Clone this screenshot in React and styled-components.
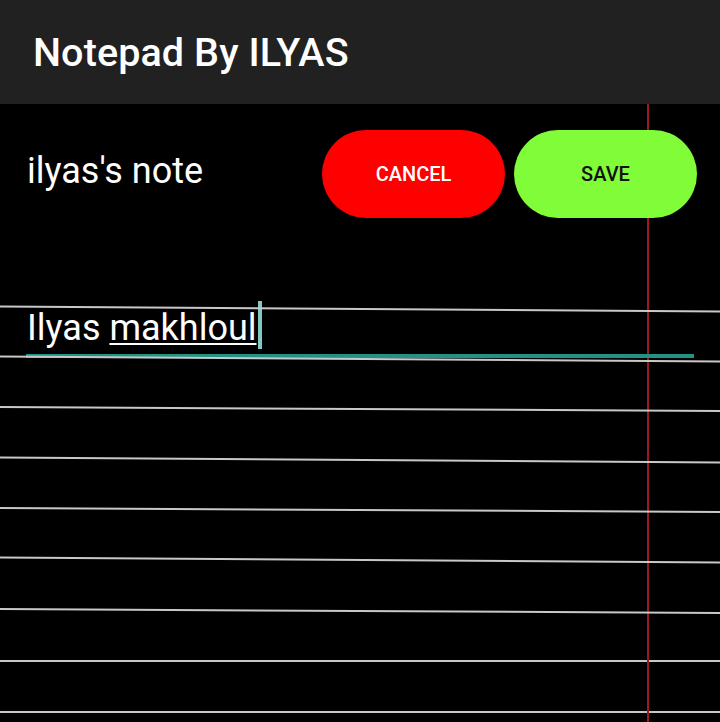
import React from 'react';
import styled, { createGlobalStyle } from 'styled-components';

const GlobalStyle = createGlobalStyle`
  html, body {
    margin: 0;
    padding: 0;
    background: #000;
    font-family: Roboto, 'Noto Sans', sans-serif;
  }
`;

const Page = styled.div`
  width: 720px;
  height: 722px;
  background: #000;
  display: flex;
  flex-direction: column;
  overflow: hidden;
`;

const AppBar = styled.header`
  height: 104px;
  flex-shrink: 0;
  background: #212121;
  display: flex;
  align-items: center;
  padding-left: 33px;
`;

const Title = styled.h1`
  margin: 0;
  color: #fff;
  font-size: 39.5px;
  font-weight: 500;
  letter-spacing: 0.1px;
`;

const Sheet = styled.main`
  flex: 1;
  display: grid;
  grid-template: 1fr / 1fr;
  overflow: hidden;
`;

// horizontal rules of the notepad paper
const Rules = styled.div`
  grid-area: 1 / 1;
  display: flex;
  flex-direction: column;
  gap: 48.4px;
  padding-top: 203.5px;
`;

const Rule = styled.div`
  height: 2px;
  flex-shrink: 0;
  background: #c8c8c8;
  transform: ${props => (props.tilt ? `rotate(${props.tilt}deg)` : 'none')};
`;

const MarginLine = styled.div`
  grid-area: 1 / 1;
  justify-self: start;
  width: 2px;
  margin-left: 647px;
  background: #9e1a1d;
`;

const Content = styled.div`
  grid-area: 1 / 1;
  display: flex;
  flex-direction: column;
`;

const TopRow = styled.div`
  display: flex;
  align-items: flex-start;
  padding: 26px 23px 0 27px;
`;

const NoteName = styled.div`
  flex: 1;
  margin-top: 19.6px;
  color: #fff;
  font-size: 36px;
  line-height: normal;
`;

const Actions = styled.div`
  display: flex;
  gap: 9px;
`;

const PillButton = styled.button`
  width: 183px;
  height: 88px;
  border: none;
  border-radius: 44px;
  background: ${props => props.bg};
  color: ${props => props.fg};
  font-family: Roboto, sans-serif;
  font-size: 20px;
  font-weight: 500;
  letter-spacing: 0;
  padding: 0;
  cursor: pointer;
`;

const Editor = styled.div`
  margin: 82.6px 0 0 26px;
  width: 667px;
  padding: 0 0 5px 1px;
  border-bottom: 4px solid #209384;
  color: #fff;
  font-size: 36px;
  line-height: normal;
  white-space: nowrap;
`;

const Misspelled = styled.span`
  text-decoration: underline;
  text-decoration-thickness: 2px;
  text-underline-offset: 3px;
`;

const Caret = styled.span`
  display: inline-block;
  width: 4px;
  height: 48px;
  margin-left: 1px;
  vertical-align: -9px;
  background: #7fcbc1;
`;

const tilts = [0.4, 0.4, 0.32, 0.4, 0.32, 0.4, 0.32, 0, 0];

export default function App() {
  return (
    <>
      <GlobalStyle />
      <Page>
        <AppBar>
          <Title>Notepad By ILYAS</Title>
        </AppBar>
        <Sheet>
          <Rules>
            {tilts.map((t, i) => (
              <Rule key={i} tilt={t} />
            ))}
          </Rules>
          <MarginLine />
          <Content>
            <TopRow>
              <NoteName>ilyas's note</NoteName>
              <Actions>
                <PillButton bg="#ff0000" fg="#ffffff">CANCEL</PillButton>
                <PillButton bg="#80fc38" fg="#111111">SAVE</PillButton>
              </Actions>
            </TopRow>
            <Editor>
              Ilyas <Misspelled>makhloul</Misspelled>
              <Caret />
            </Editor>
          </Content>
        </Sheet>
      </Page>
    </>
  );
}
